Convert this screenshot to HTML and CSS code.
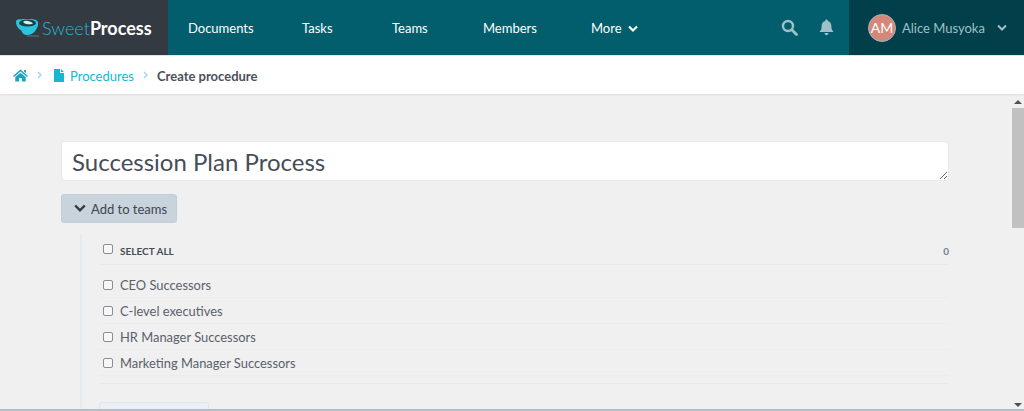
FILE: index.html
```html
<!DOCTYPE html>
<html lang="en">
<head>
	<meta charset="UTF-8">
	<title>Create procedure</title>
	<link rel="stylesheet" href="styles.css">
</head>
<body>
	<div class="topbar">
		<div class="logo">
			<svg class="logo-cup" width="24" height="18" viewBox="0 0 24 18">
				<path d="M0 3 C0 1 2 0 4 0.5 C8 -0.5 17 -0.5 20 1 C22 2 22.5 4 22 6 C21 11 17 16 11 16 C8 16 6 14 5 11 C2 10 0 6 0 3 Z" fill="#29c5e0"/>
				<ellipse cx="11.5" cy="4" rx="8.5" ry="3.6" fill="#17414c"/>
				<path d="M7 3 C9 1 14 1.500 17 4.500 C13 6 9 5.500 7 3 Z" fill="#d6eef2"/>
				<path d="M11 17 H23" stroke="#5d7a80" stroke-width="1"/>
			</svg>
			<span class="logo-sweet">Sweet</span><span class="logo-process">Process</span>
		</div>
		<ul class="nav">
			<li class="nav-docs">Documents</li>
			<li class="nav-tasks">Tasks</li>
			<li class="nav-teams">Teams</li>
			<li class="nav-members">Members</li>
			<li class="nav-more">More
				<svg width="10" height="8" viewBox="0 0 10 8"><path d="M1 1.500 L5 5.500 L9 1.500" fill="none" stroke="#fff" stroke-width="2.2"/></svg>
			</li>
		</ul>
		<div class="tools">
			<svg width="17" height="17" viewBox="0 0 17 17"><circle cx="7" cy="7" r="5" fill="none" stroke="#9fc0c6" stroke-width="2.4"/><path d="M10.800 10.800 L15.500 15.500" stroke="#9fc0c6" stroke-width="2.800" stroke-linecap="round"/></svg>
			<svg width="15" height="17" viewBox="0 0 15 17"><path d="M7.500 0.500 C8.400 0.500 8.800 1.200 8.800 2 C11.500 2.600 12.400 5 12.400 7.500 C12.400 10 13.200 11.500 14.500 13 H0.500 C1.800 11.500 2.600 10 2.600 7.500 C2.600 5 3.500 2.600 6.200 2 C6.200 1.200 6.600 0.500 7.500 0.500 Z M5.500 14 H9.500 C9.500 15.400 8.600 16.200 7.500 16.200 C6.400 16.200 5.500 15.400 5.500 14 Z" fill="#9fc0c6"/></svg>
		</div>
		<div class="user">
			<div class="avatar">AM</div>
			<span class="user-name">Alice Musyoka</span>
			<svg width="10" height="8" viewBox="0 0 10 8"><path d="M1 1.500 L5 5.500 L9 1.500" fill="none" stroke="#9fc0c6" stroke-width="2"/></svg>
		</div>
	</div>

	<div class="crumbs">
		<svg width="15" height="13" viewBox="0 0 15 13"><path d="M7.500 0.500 L15 7 L14 8 L7.500 2.600 L1 8 L0 7 Z M2.300 8 L7.500 3.800 L12.700 8 V12.500 H9 V9 H6 V12.500 H2.300 Z" fill="#17a5c2"/><path d="M11 1 H13 V4 L11 2.500 Z" fill="#17a5c2"/></svg>
		<svg class="crumb-sep" width="5" height="8" viewBox="0 0 5 8"><path d="M1 1 L4 4 L1 7" fill="none" stroke="#9cd8e4" stroke-width="1.300"/></svg>
		<svg class="crumb-file" width="10" height="13" viewBox="0 0 10 13"><path d="M0 0 H6 V4 H10 V13 H0 Z M7 0 L10 3 H7 Z" fill="#17b6d3"/></svg>
		<a class="crumb-link">Procedures</a>
		<svg class="crumb-sep crumb-sep2" width="5" height="8" viewBox="0 0 5 8"><path d="M1 1 L4 4 L1 7" fill="none" stroke="#9cd8e4" stroke-width="1.300"/></svg>
		<span class="crumb-now">Create procedure</span>
	</div>

	<div class="page">
		<div class="content">
			<textarea class="title-box" rows="1">Succession Plan Process</textarea>
			<div class="team-btn">
				<svg width="12" height="9" viewBox="0 0 12 9"><path d="M1.200 1.500 L6 6.300 L10.800 1.500" fill="none" stroke="#2f3a44" stroke-width="2.400"/></svg>
				Add to teams
			</div>
			<div class="teams">
				<div class="select-all">
					<span class="check"></span>
					<span class="select-label">SELECT ALL</span>
					<span class="count">0</span>
				</div>
				<ul class="team-list">
					<li><span class="check"></span>CEO Successors</li>
					<li><span class="check"></span>C-level executives</li>
					<li><span class="check"></span>HR Manager Successors</li>
					<li><span class="check"></span>Marketing Manager Successors</li>
				</ul>
				<div class="new-team"></div>
			</div>
		</div>
		<div class="scrollbar">
			<span class="arrow-up"></span>
			<div class="thumb"></div>
			<span class="arrow-down"></span>
		</div>
	</div>
</body>
</html>
```

FILE: styles.css
```css
html, body{
	margin: 0;
	padding: 0;
	height: 411px;
	overflow: hidden;
}
body{
	display: flex;
	flex-direction: column;
	font-family: "Lato", "Liberation Sans", sans-serif;
	background: #f0f0f0;
	border-bottom: 2px solid #b4bcc6;
	box-sizing: border-box;
}
ul{
	list-style: none;
	margin: 0;
	padding: 0;
}

/* top bar */
.topbar{
	display: flex;
	height: 55px;
	flex: none;
	background: #025e6c;
	color: #fff;
	font-size: 13px;
}
.logo{
	width: 168px;
	box-sizing: border-box;
	padding-left: 16px;
	display: flex;
	align-items: center;
	background: #343a42;
	font-size: 18px;
}
.logo-cup{
	margin-right: 2px;
}
.logo-sweet{
	color: #2db4c9;
	font-weight: 300;
}
.logo-process{
	color: #fff;
	font-weight: 700;
}
.nav{
	display: flex;
	align-items: center;
	flex: 1;
	padding-left: 20px;
}
.nav-docs{ width: 114px; }
.nav-tasks{ width: 90px; }
.nav-teams{ width: 91px; }
.nav-members{ width: 108px; }
.nav-more svg{
	margin-left: 3px;
}
.tools{
	display: flex;
	align-items: center;
	gap: 21px;
	padding-right: 15px;
}
.user{
	width: 175px;
	box-sizing: border-box;
	padding-left: 19px;
	display: flex;
	align-items: center;
	background: #013f4a;
	color: #9fc0c6;
}
.avatar{
	width: 26px;
	height: 26px;
	border: 1px solid #9fb7ba;
	border-radius: 50%;
	background: #d5877a;
	color: #fff;
	font-size: 14px;
	text-align: center;
	line-height: 26px;
	margin-right: 6px;
}
.user-name{
	margin-right: 12px;
}

/* breadcrumb */
.crumbs{
	display: flex;
	align-items: center;
	height: 39px;
	flex: none;
	box-sizing: border-box;
	border-top: 1px solid #dfe7e9;
	padding-left: 13px;
	background: #fff;
	box-shadow: 0 1px 2px rgba(0,0,0,.08);
	font-size: 13px;
	position: relative;
}
.crumb-sep{
	margin: 0 12px 0 9px;
}
.crumb-sep2{
	margin: 0 9px 0 9px;
}
.crumb-file{
	margin-right: 6px;
}
.crumb-link{
	color: #17b6d3;
	padding-top: 1px;
}
.crumb-now{
	color: #4a5059;
	font-weight: 700;
	padding-top: 1px;
}

/* main area */
.page{
	display: flex;
	flex: 1;
	min-height: 0;
}
.content{
	flex: 1;
	padding: 47px 58px 0 61px;
	min-width: 0;
}
.title-box{
	display: block;
	width: 100%;
	height: 40px;
	box-sizing: border-box;
	padding: 5px 10px 3px;
	border: 1px solid #e6e8ea;
	border-radius: 4px;
	background: #fff;
	font-family: "Lato", "Liberation Sans", sans-serif;
	font-size: 24px;
	line-height: 30px;
	color: #474d57;
	resize: vertical;
	outline: none;
}
.team-btn{
	display: inline-flex;
	align-items: center;
	gap: 5px;
	width: 116px;
	height: 29px;
	margin-top: 13px;
	padding-left: 12px;
	box-sizing: border-box;
	border: 1px solid #c4ced7;
	border-radius: 3px;
	background: #c9d3dc;
	font-size: 13px;
	color: #3d4650;
	vertical-align: top;
}
.teams{
	margin: 11px 0 0 19px;
	padding-left: 17px;
	border-left: 2px solid #e6ebef;
}
.select-all{
	display: flex;
	align-items: center;
	height: 31px;
	box-sizing: border-box;
	padding: 0 0 1px 4px;
	border-bottom: 1px solid #e9e9e9;
	font-size: 10px;
	font-weight: 700;
	color: #454c55;
}
.select-label{
	flex: 1;
	padding-top: 5px;
}
.count{
	padding-top: 5px;
	color: #757c86;
}
.check{
	width: 8px;
	height: 8px;
	flex: none;
	border: 1px solid #8a8f96;
	border-radius: 2px;
	background: #f7f7f7;
	margin-right: 7px;
}
.team-list{
	padding-top: 7px;
	padding-bottom: 7px;
	border-bottom: 1px solid #e9e9e9;
}
.team-list li{
	display: flex;
	align-items: center;
	height: 26px;
	box-sizing: border-box;
	padding-left: 4px;
	border-bottom: 1px solid #ececec;
	font-size: 12.900px;
	color: #5a616b;
}
.new-team{
	width: 110px;
	height: 7px;
	margin-top: 18px;
	box-sizing: border-box;
	border: 1px solid #dfe5ea;
	border-bottom: 0;
	border-radius: 3px 3px 0 0;
	background: #e9eff4;
}

/* drawn scrollbar */
.scrollbar{
	width: 17px;
	flex: none;
	display: flex;
	flex-direction: column;
	align-items: center;
	padding: 6px 0 0 4px;
	box-sizing: border-box;
}
.thumb{
	width: 12px;
	height: 120px;
	margin-top: 4px;
	background: #c1c1c1;
}
.arrow-up{
	width: 0;
	height: 0;
	border-left: 4px solid transparent;
	border-right: 4px solid transparent;
	border-bottom: 4px solid #505050;
}
.arrow-down{
	width: 0;
	height: 0;
	margin-top: auto;
	margin-bottom: 2px;
	border-left: 4px solid transparent;
	border-right: 4px solid transparent;
	border-top: 4px solid #505050;
}
```
